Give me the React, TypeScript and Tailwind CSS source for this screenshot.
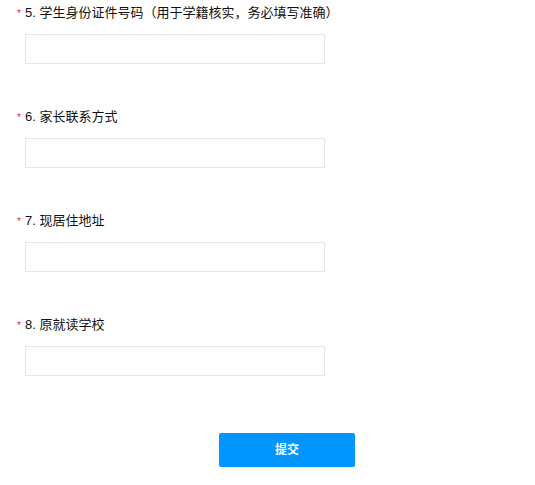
import React from "react";

const questions = [
    { no: 5, title: "学生身份证件号码（用于学籍核实，务必填写准确）" },
    { no: 6, title: "家长联系方式" },
    { no: 7, title: "现居住地址" },
    { no: 8, title: "原就读学校" },
];

const App = () => {
    return (
        <div
            className="w-[535px] h-[485px] bg-white pt-[3px] text-[#111]"
            style={{ fontFamily: '"Liberation Sans", "Noto Sans CJK SC", sans-serif' }}
        >
            {questions.map((q) => (
                <div key={q.no} className="mb-[43px]">
                    {/* LABEL */}
                    <div className="flex items-center h-[20px] pl-[17px] text-[13px] leading-[20px]">
                        <span className="text-[#f5222d] text-[10px] w-[8px] mt-[2px]">*</span>
                        <span>
                            {q.no}. {q.title}
                        </span>
                    </div>

                    {/* INPUT */}
                    <input
                        type="text"
                        className="block ml-[25px] mt-[11px] w-[300px] h-[30px] border border-[#e6e6e6] outline-none px-2 text-[13px]"
                    />
                </div>
            ))}

            {/* BUTTON */}
            <button className="ml-[219px] mt-[14px] w-[136px] h-[34px] rounded-[2px] bg-[#0095ff] text-white text-[12px] font-bold">
                提交
            </button>
        </div>
    );
};

export default App;
